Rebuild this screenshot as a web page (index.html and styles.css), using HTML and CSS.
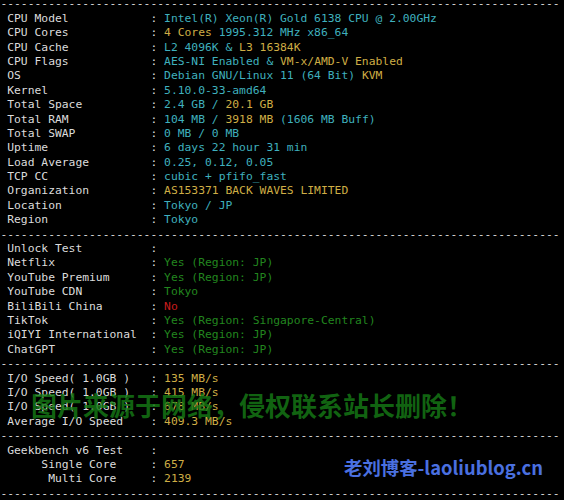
FILE: index.html
```html
<!DOCTYPE html>
<html>
<head>
<meta charset="utf-8">
<link rel="stylesheet" href="styles.css">
</head>
<body>
<div class="term">
<div class="ln">----------------------------------------------------------------------------------</div>
<div class="ln"> CPU Model            : <span class="c">Intel(R) Xeon(R) Gold 6138 CPU @ 2.00GHz</span></div>
<div class="ln"> CPU Cores            : <span class="y">4 Cores </span><span class="c">1995.312 MHz x86_64</span></div>
<div class="ln"> CPU Cache            : <span class="c">L2 4096K &amp; </span><span class="y">L3 16384K</span></div>
<div class="ln"> CPU Flags            : <span class="c">AES-NI Enabled &amp; </span><span class="y">VM-x/AMD-V Enabled</span></div>
<div class="ln"> OS                   : <span class="c">Debian GNU/Linux 11 (64 Bit) </span><span class="y">KVM</span></div>
<div class="ln"> Kernel               : <span class="c">5.10.0-33-amd64</span></div>
<div class="ln"> Total Space          : <span class="c">2.4 GB / </span><span class="y">20.1 GB</span></div>
<div class="ln"> Total RAM            : <span class="c">104 MB / </span><span class="y">3918 MB</span><span class="c"> (1606 MB Buff)</span></div>
<div class="ln"> Total SWAP           : <span class="c">0 MB / 0 MB</span></div>
<div class="ln"> Uptime               : <span class="c">6 days 22 hour 31 min</span></div>
<div class="ln"> Load Average         : <span class="c">0.25, 0.12, 0.05</span></div>
<div class="ln"> TCP CC               : <span class="c">cubic + pfifo_fast</span></div>
<div class="ln"> Organization         : <span class="y">AS153371 BACK WAVES LIMITED</span></div>
<div class="ln"> Location             : <span class="c">Tokyo / JP</span></div>
<div class="ln"> Region               : <span class="c">Tokyo</span></div>
<div class="ln">----------------------------------------------------------------------------------</div>
<div class="ln"> Unlock Test          :</div>
<div class="ln"> Netflix              : <span class="g">Yes (Region: JP)</span></div>
<div class="ln"> YouTube Premium      : <span class="g">Yes (Region: JP)</span></div>
<div class="ln"> YouTube CDN          : <span class="g">Tokyo</span></div>
<div class="ln"> BiliBili China       : <span class="r">No</span></div>
<div class="ln"> TikTok               : <span class="g">Yes (Region: Singapore-Central)</span></div>
<div class="ln"> iQIYI International  : <span class="g">Yes (Region: JP)</span></div>
<div class="ln"> ChatGPT              : <span class="g">Yes (Region: JP)</span></div>
<div class="ln">----------------------------------------------------------------------------------</div>
<div class="ln"> I/O Speed( 1.0GB )   : <span class="y">135 MB/s</span></div>
<div class="ln"> I/O Speed( 1.0GB )   : <span class="y">415 MB/s</span></div>
<div class="ln"> I/O Speed( 1.0GB )   : <span class="y">678 MB/s</span></div>
<div class="ln"> Average I/O Speed    : <span class="y">409.3 MB/s</span></div>
<div class="ln">----------------------------------------------------------------------------------</div>
<div class="ln"> Geekbench v6 Test    :</div>
<div class="ln">      Single Core     : <span class="y">657</span></div>
<div class="ln">       Multi Core     : <span class="y">2139</span></div>
<div class="ln">----------------------------------------------------------------------------------</div>
</div>
<div class="wm-green">图片来源于网络，侵权联系站长删除！</div>
<div class="wm-blue">老刘博客-laoliublog.cn</div>
</body>
</html>
```

FILE: styles.css
```css
html, body {
  margin: 0;
  padding: 0;
  background: #000;
  width: 564px;
  height: 500px;
  overflow: hidden;
  position: relative;
}
.term {
  margin-top: -3.6px;
  margin-left: 0.4px;
  font-family: "DejaVu Sans Mono", monospace;
  font-size: 11.34px;
  line-height: 14.4px;
  color: #dcdcdc;
}
.ln {
  white-space: pre;
  height: 14.4px;
  overflow: hidden;
}
.c { color: #3fb0be; }
.y { color: #cfae45; }
.g { color: #22861f; }
.r { color: #c81d1d; }
.wm-green {
  position: absolute;
  left: 31px;
  top: 391px;
  font-family: "Noto Sans CJK SC", sans-serif;
  font-weight: 700;
  font-size: 26px;
  line-height: 28px;
  color: rgba(22, 122, 22, 0.82);
  white-space: nowrap;
}
.wm-blue {
  position: absolute;
  left: 344px;
  top: 455px;
  font-family: "Noto Sans CJK SC", sans-serif;
  font-weight: 700;
  font-size: 18.4px;
  line-height: 24px;
  color: #4a70e0;
  white-space: nowrap;
}
```
